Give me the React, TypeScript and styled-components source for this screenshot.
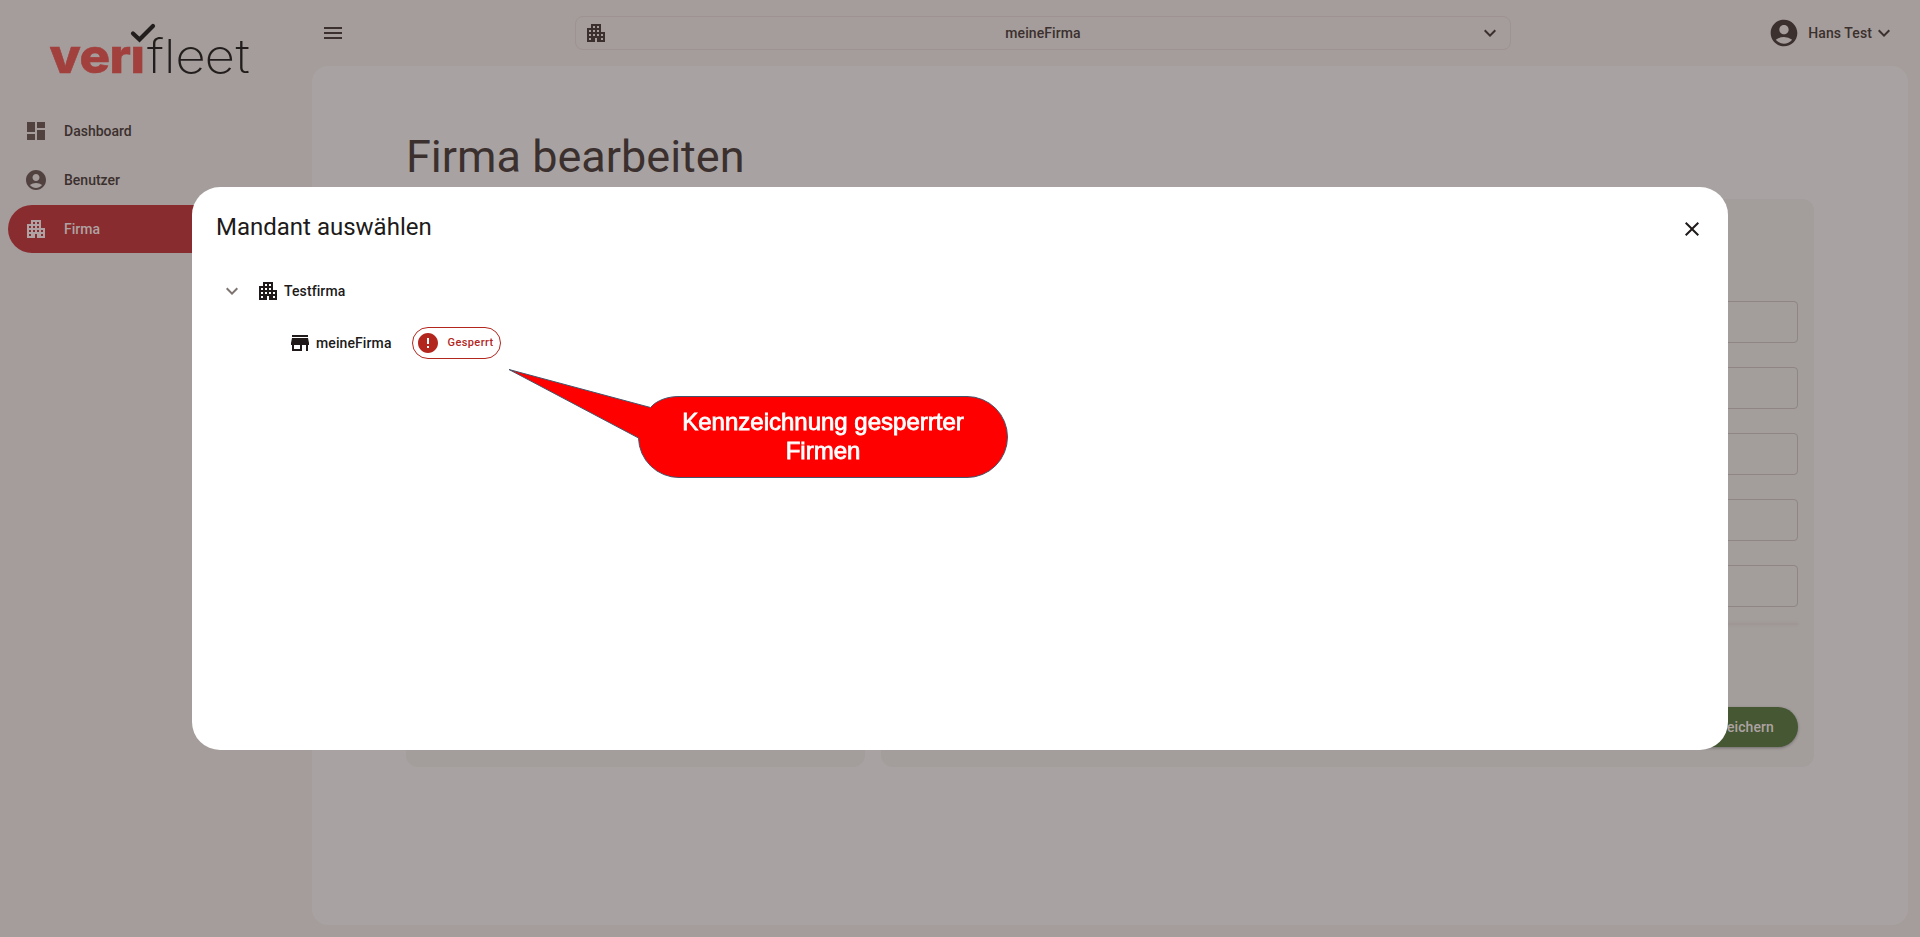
import React from "react";
import styled, { createGlobalStyle, css } from "styled-components";
import {
  MdAccountCircle,
  MdApartment,
  MdClose,
  MdDashboard,
  MdError,
  MdExpandMore,
  MdMenu,
  MdStore,
} from "react-icons/md";

const color = {
  page: "#a59d9b",
  surface: "#a8a3a2",
  card: "#a39d9c",
  text: "#3b302e",
  muted: "#51423f",
  primary: "#892c30",
  onPrimary: "#aea3a2",
  outline: "#8e8584",
  success: "#455733",
  error: "#b3261e",
  ink: "#201a1a",
};

const GlobalStyle = createGlobalStyle`
  * { box-sizing: border-box; }
  html, body, #root { height: 100%; }
  body {
    margin: 0;
    overflow: hidden;
    background: ${color.page};
    color: ${color.text};
    font-family: Roboto, sans-serif;
    font-size: 14px;
  }
`;

const Shell = styled.div`
  display: flex;
  height: 100vh;
`;

const Sidebar = styled.aside`
  width: 312px;
  flex: none;
`;

const LogoArea = styled.div`
  height: 107px;
`;

const Nav = styled.nav`
  display: flex;
  flex-direction: column;
  gap: 1px;
  padding: 0 8px;
`;

const NavItem = styled.a<{ $active?: boolean }>`
  display: flex;
  align-items: center;
  gap: 16px;
  height: 48px;
  padding: 0 16px;
  border-radius: 24px;
  font-weight: 500;
  svg {
    color: ${color.muted};
  }
  ${(p) =>
    p.$active &&
    css`
      background: ${color.primary};
      color: ${color.onPrimary};
      svg {
        color: ${color.onPrimary};
      }
    `}
`;

const Main = styled.div`
  flex: 1;
  display: flex;
  flex-direction: column;
  padding: 0 12px 12px 0;
`;

const Header = styled.header`
  display: flex;
  align-items: center;
  height: 66px;
  padding: 0 12px 0 9px;
`;

const ClientSelect = styled.button`
  display: flex;
  align-items: center;
  justify-content: space-between;
  width: 936px;
  height: 34px;
  margin-left: 230px;
  padding: 0 8px;
  border: 1px solid #9f9391;
  border-radius: 8px;
  background: none;
  color: inherit;
  font: 500 14px Roboto, sans-serif;
  letter-spacing: 0.1px;
`;

const UserMenu = styled.div`
  display: flex;
  align-items: center;
  margin-left: auto;
  font-weight: 500;
  letter-spacing: 0.1px;
  span {
    margin: 0 0 0 8px;
  }
`;

const Content = styled.main`
  flex: 1;
  padding: 65px 94px 0;
  border-radius: 16px;
  background: ${color.surface};
`;

const PageTitle = styled.h1`
  margin: 0 0 16px;
  font-size: 45px;
  line-height: 52px;
  font-weight: 400;
`;

const Cards = styled.div`
  display: grid;
  grid-template-columns: 459px 933px;
  gap: 16px;
  height: 568px;
`;

const Card = styled.section`
  display: flex;
  flex-direction: column;
  padding: 102px 16px 20px;
  border-radius: 12px;
  background: ${color.card};
`;

const Fields = styled.div`
  display: flex;
  flex-direction: column;
  gap: 24px;
`;

const Field = styled.div`
  height: 42px;
  border: 1px solid ${color.outline};
  border-radius: 4px;
`;

const Divider = styled.div`
  height: 2px;
  margin-top: 16px;
  background: #9e9796;
  box-shadow: 0 0 3px #9b9392;
`;

const SaveButton = styled.button`
  align-self: flex-end;
  height: 40px;
  margin-top: auto;
  padding: 0 24px;
  border: 0;
  border-radius: 20px;
  background: ${color.success};
  box-shadow: 0 1px 3px rgba(0, 0, 0, 0.3);
  color: ${color.onPrimary};
  font: 500 14px Roboto, sans-serif;
  letter-spacing: 0.1px;
`;

const Backdrop = styled.div`
  position: fixed;
  inset: 0;
  display: flex;
  align-items: center;
  justify-content: center;
`;

const Dialog = styled.div`
  width: 80%;
  height: 60%;
  padding: 24px;
  border-radius: 28px;
  background: #fff;
  color: ${color.ink};
`;

const DialogHeader = styled.div`
  display: flex;
  justify-content: space-between;
  align-items: flex-start;
  h2 {
    margin: 0;
    font-size: 24px;
    line-height: 32px;
    font-weight: 400;
  }
  svg {
    margin: 6px 0 0;
  }
`;

const TreeRow = styled.div<{ $level: number }>`
  display: flex;
  align-items: center;
  height: 52px;
  padding-left: ${(p) => 4 + p.$level * 68}px;
  font-weight: 500;
  letter-spacing: 0.1px;
`;

const Tree = styled.div`
  padding-top: 22px;
`;

const Toggle = styled.span`
  display: flex;
  width: 36px;
  color: #7d7371;
`;

const NodeLabel = styled.span`
  margin-left: 4px;
`;

const Chip = styled.span`
  display: flex;
  align-items: center;
  gap: 8px;
  height: 32px;
  margin-left: 20px;
  padding: 0 6px 0 3px;
  border: 1px solid ${color.error};
  border-radius: 16px;
  color: ${color.error};
  font-size: 11px;
  letter-spacing: 0.4px;
  span {
    padding-bottom: 1px;
  }
`;

const Callout = styled.div`
  position: absolute;
  left: 508px;
  top: 368px;
  width: 502px;
  height: 112px;
  svg {
    position: absolute;
    inset: 0;
  }
  p {
    position: relative;
    margin: 39px 32px 0 160px;
    color: #fff;
    font: 24px/29px "Liberation Sans", Arial, sans-serif;
    text-align: center;
    -webkit-text-stroke: 0.8px #fff;
  }
`;

function Logo() {
  return (
    <svg width="312" height="107" viewBox="0 0 312 107" role="img" aria-label="verifleet">
      <g fontFamily="Inter, sans-serif" fontSize="48" fontWeight="800" fill="#a2403e" stroke="#a2403e" strokeWidth="0.6">
        <text transform="scale(1.06 1)" x="46.8 75 103.3 123.2" y="73.5">verı</text>
      </g>
      <g fontFamily="Inter, sans-serif" fontSize="47" fontWeight="200" fill="#231e1e">
        <text transform="scale(1.13 1)" x="130.1 144.9 155.2 180.9 208.3" y="73.5">fleet</text>
      </g>
      <path d="M133 33.5 L139.5 39.5 L153 26" fill="none" stroke="#231e1e" strokeWidth="4.2" strokeLinecap="round" />
    </svg>
  );
}

export default function App() {
  return (
    <>
      <GlobalStyle />
      <Shell>
        <Sidebar>
          <LogoArea>
            <Logo />
          </LogoArea>
          <Nav>
            <NavItem><MdDashboard size={24} />Dashboard</NavItem>
            <NavItem><MdAccountCircle size={24} />Benutzer</NavItem>
            <NavItem $active><MdApartment size={24} />Firma</NavItem>
          </Nav>
        </Sidebar>
        <Main>
          <Header>
            <MdMenu size={24} />
            <ClientSelect>
              <MdApartment size={24} />
              <span>meineFirma</span>
              <MdExpandMore size={24} />
            </ClientSelect>
            <UserMenu>
              <MdAccountCircle size={32} />
              <span>Hans Test</span>
              <MdExpandMore size={24} />
            </UserMenu>
          </Header>
          <Content>
            <PageTitle>Firma bearbeiten</PageTitle>
            <Cards>
              <Card />
              <Card>
                <Fields>
                  <Field />
                  <Field />
                  <Field />
                  <Field />
                  <Field />
                </Fields>
                <Divider />
                <SaveButton>Speichern</SaveButton>
              </Card>
            </Cards>
          </Content>
        </Main>
      </Shell>
      <Backdrop>
        <Dialog role="dialog">
          <DialogHeader>
            <h2>Mandant auswählen</h2>
            <MdClose size={24} />
          </DialogHeader>
          <Tree>
            <TreeRow $level={0}>
              <Toggle><MdExpandMore size={24} /></Toggle>
              <MdApartment size={24} />
              <NodeLabel>Testfirma</NodeLabel>
            </TreeRow>
            <TreeRow $level={1}>
              <MdStore size={24} />
              <NodeLabel>meineFirma</NodeLabel>
              <Chip><MdError size={24} /><span>Gesperrt</span></Chip>
            </TreeRow>
          </Tree>
        </Dialog>
      </Backdrop>
      <Callout>
        <svg width="502" height="112" viewBox="0 0 502 112">
          <path
            d="M1 1.5 L142.5 39.5 C149 32 160 28.5 171 28.5 H459 A40.5 40.5 0 0 1 459 109.5 H171 A40.5 40.5 0 0 1 130.5 70 Z"
            fill="#fe0000"
            stroke="#44546a"
            strokeWidth="1"
          />
        </svg>
        <p>Kennzeichnung gesperrter Firmen</p>
      </Callout>
    </>
  );
}
